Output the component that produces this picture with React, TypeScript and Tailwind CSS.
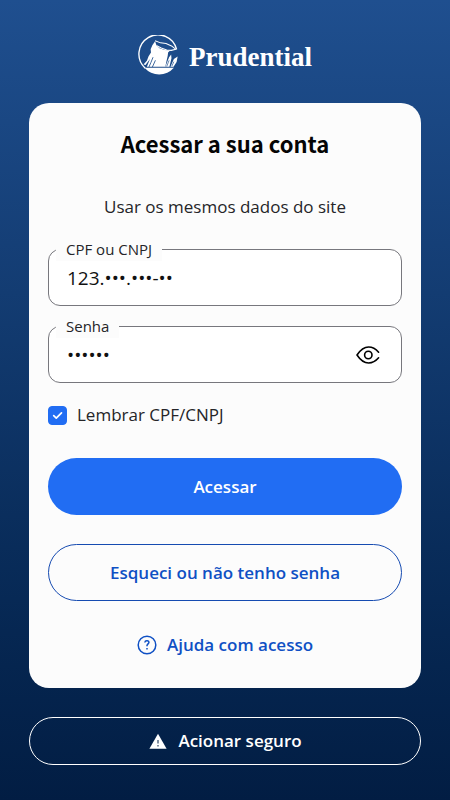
import { useState } from "react";

function RockLogo() {
  return (
    <svg viewBox="0 0 120 120" className="size-[41px] shrink-0" fill="none" aria-hidden="true">
      <path d="M113 42 A56 56 0 1 0 21 97" stroke="white" strokeWidth="4" />
      <path d="M19 96 H105 A57 57 0 0 1 19 96 Z" fill="white" />
      <path d="M50 18 L42 30 L37 42 L38 51 L31 62 L26 75 L16 86 L22 88 L35 70 L26 93 H80 L83 78 L87 61 L88 51 L94 45 L78 44 L63 39 L54 30 Z" fill="white" />
      <path d="M50 17 L66 23 L82 25 L98 32 L111 42 L97 45 L84 44 L68 38 L55 31" stroke="white" strokeWidth="3" strokeLinejoin="round" />
      <path d="M44 65 L38 80 L32 94 M51 74 L42 94" stroke="#1f4f8d" strokeWidth="2.5" />
      <path d="M80 93 L91 65 L97 57 L98 68 L92 93 Z M95 93 L105 70 L116 63 L113 79 L104 93 Z" fill="white" />
      <path d="M84 92 L91 74 M99 91 L105 78" stroke="#1f4f8d" strokeWidth="2" />
    </svg>
  );
}

function EyeIcon() {
  return (
    <svg viewBox="0 0 24 20" className="h-5 w-6" fill="none" stroke="currentColor" strokeWidth="1.6" strokeLinecap="round" strokeLinejoin="round" aria-hidden="true">
      <path d="M22.6 7.2 C19.5 3.6 16 2 12.6 2 C8 2 4.2 5.2 1 10 C4.2 14.8 8 18 12.6 18 C16 18 19.5 16.4 22.6 12.8" />
      <circle cx="12.3" cy="10" r="3.7" />
    </svg>
  );
}

const label = "absolute -top-3 left-2 bg-[#fcfcfc] px-2.5 text-[15px] leading-6 text-[#252528]";
const field = "block h-[57px] w-full rounded-xl border border-[#77777d] bg-white px-[18px] text-[19px] text-[#111] outline-none focus:border-[#216df3]";

export default function App() {
  const [password, setPassword] = useState("123456");
  const [document, setDocument] = useState("123.•••.•••-••");
  const [visible, setVisible] = useState(false);

  return (
    <main className="flex min-h-screen flex-col bg-linear-to-b from-[#1f4f8f] to-[#021d43] px-[29px] pt-[35px] pb-9 font-['Open_Sans','Noto_Sans',sans-serif]">
      <header className="flex h-10 items-center justify-center gap-2.5 text-white">
        <RockLogo />
        <span className="pt-1 font-['Liberation_Serif',serif] text-[27px] leading-10 font-bold">Prudential</span>
      </header>

      <section className="mt-7 rounded-[20px] bg-[#fcfcfc] px-[19px] pt-[26px] pb-[31px]">
        <h1 className="text-center font-['Noto_Sans_CJK_JP',sans-serif] text-[22px] leading-7 font-bold text-[#050505]">Acessar a sua conta</h1>
        <p className="mt-[38px] text-center text-[17px] leading-6 text-[#252528]">Usar os mesmos dados do site</p>

        <form onSubmit={(event) => event.preventDefault()}>
          <div className="relative mt-[30px]">
            <input id="document" className={field} value={document} onChange={(event) => setDocument(event.target.value)} />
            <label htmlFor="document" className={label}>CPF ou CNPJ</label>
          </div>
          <div className="relative mt-5">
            <input id="password" type={visible ? "text" : "password"} className={field} value={password} onChange={(event) => setPassword(event.target.value)} />
            <label htmlFor="password" className={label}>Senha</label>
            <button type="button" aria-label="Mostrar senha" onClick={() => setVisible(!visible)} className="absolute inset-y-0 right-[22px] flex items-center text-black">
              <EyeIcon />
            </button>
          </div>

          <div className="mt-5 flex h-6 items-center gap-2.5">
            <span className="relative flex size-[19px]">
              <input id="remember" type="checkbox" defaultChecked className="peer size-[19px] appearance-none rounded-[4px] border border-[#216df3] checked:bg-[#216df3]" />
              <svg viewBox="0 0 20 20" className="pointer-events-none absolute inset-0 hidden size-[19px] peer-checked:block" fill="none" stroke="white" strokeWidth="1.8" strokeLinecap="round" strokeLinejoin="round" aria-hidden="true">
                <path d="M6 10.2 L8.7 12.8 L14.2 7.3" />
              </svg>
            </span>
            <label htmlFor="remember" className="text-[17px] leading-6 text-[#252528]">Lembrar CPF/CNPJ</label>
          </div>

          <button type="submit" className="mt-[31px] block h-[57px] w-full rounded-full bg-[#216df3] text-[17px] font-semibold text-white">Acessar</button>
        </form>

        <button type="button" className="mt-[29px] block h-[57px] w-full rounded-full border border-[#164bb1] text-[17px] font-semibold text-[#0f50c4]">Esqueci ou não tenho senha</button>
        <a href="#ajuda" className="mx-auto mt-8 flex h-6 w-fit items-center gap-2.5 text-[17px] font-semibold text-[#0f50c4]">
          <svg viewBox="0 0 20 20" className="size-5" fill="none" stroke="currentColor" strokeWidth="1.5" aria-hidden="true">
            <circle cx="10" cy="10" r="8.8" />
            <path d="M7.8 7.5 C8 6.2 9 5.6 10.1 5.7 C11.3 5.8 12.1 6.5 11.9 7.6 C11.7 8.8 10 9 10 10.6 V11.2 M10 13 V14.6" />
          </svg>
          Ajuda com acesso
        </a>
      </section>

      <button type="button" className="mt-[29px] flex h-12 w-full items-center justify-center gap-2.5 rounded-full border border-white text-[17px] font-semibold text-white">
        <svg viewBox="0 0 20 18" className="h-[18px] w-5" aria-hidden="true">
          <path d="M10 1.8 L18.6 16.8 H1.4 Z" fill="white" />
          <path d="M10 8 V11.5 M10 13 V14.5" stroke="#6c7c91" strokeWidth="1.7" />
        </svg>
        Acionar seguro
      </button>
    </main>
  );
}
